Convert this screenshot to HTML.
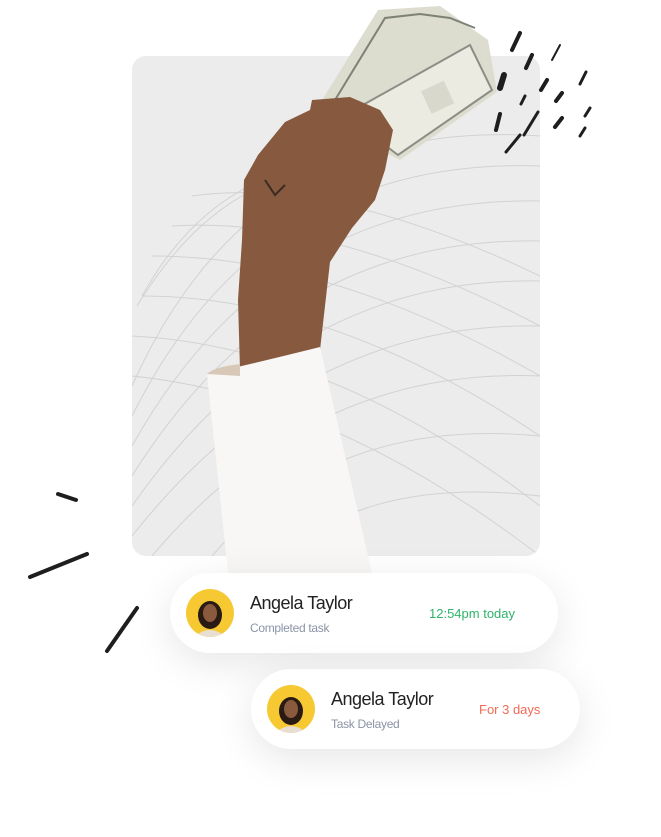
<!DOCTYPE html>
<html><head><style>
html,body{margin:0;padding:0;background:#fff;width:661px;height:837px;overflow:hidden;position:relative;font-family:"Liberation Sans",sans-serif}
.panel{position:absolute;left:132px;top:56px;width:408px;height:500px;background:#ececec;border-radius:14px;overflow:hidden}
.card{position:absolute;background:#fff;border-radius:40px;height:80px;box-shadow:0 10px 40px rgba(0,0,0,0.10)}
.av{position:absolute;width:48px;height:48px;border-radius:50%;background:#f6c933;overflow:hidden;top:16px}
.name{position:absolute;top:20px;font-size:18px;color:#222;letter-spacing:-0.5px}
.sub{position:absolute;top:48px;font-size:12px;color:#8a93a6;letter-spacing:-0.3px}
.t{position:absolute;top:33px;font-size:13px}
</style></head><body>
<div class="panel">
<svg width="408" height="500" style="position:absolute;left:0;top:0" fill="none" stroke="#d2d2d2" stroke-width="1">
<path d="M0 330 Q120 60 408 80"/><path d="M0 360 Q130 100 408 110"/><path d="M0 390 Q140 140 408 145"/><path d="M0 420 Q150 180 408 185"/><path d="M0 450 Q160 220 408 225"/><path d="M0 480 Q170 265 408 270"/><path d="M20 500 Q180 310 408 320"/><path d="M80 500 Q200 360 408 380"/><path d="M150 500 Q240 420 408 440"/>
<path d="M60 140 Q200 120 408 220"/><path d="M40 170 Q200 160 408 270"/><path d="M20 200 Q200 200 408 320"/><path d="M10 240 Q200 240 408 380"/><path d="M0 280 Q200 290 408 450"/><path d="M0 320 Q200 340 408 500"/>
<path d="M5 250 Q60 160 130 130"/><path d="M10 240 Q60 150 140 120"/>
</svg>
</div>
<svg width="661" height="837" style="position:absolute;left:0;top:0">
<!-- money -->
<path d="M322 100 L378 10 L440 6 L488 40 L497 92 L400 160 L350 135 Z" fill="#dcdccf"/>
<path d="M335 100 L385 18 L420 14 L450 18 L475 28" stroke="#7d8275" stroke-width="2" fill="none"/>
<path d="M345 115 L470 45 L492 90 L398 155 Z" fill="#ecebe1" stroke="#8d8d86" stroke-width="2"/>
<rect x="425" y="85" width="25" height="25" fill="#d8d8cc" transform="rotate(-25 437 97)"/>
<!-- hand -->
<path d="M240 370 L238 300 L242 240 L244 180 L258 155 L285 122 L310 110 L312 100 L350 97 L380 110 L393 130 L385 170 L375 200 L352 228 L330 262 L320 350 Z" fill="#875a3f"/>
<path d="M265 180 L275 195 L285 185" stroke="#3a2a22" stroke-width="2" fill="none"/>
<!-- sleeve -->
<path d="M207 374 Q260 362 320 347 L372 573 L228 573 Z" fill="#f8f7f5"/>
<path d="M207 374 Q214 367 240 364 L240 376 Z" fill="#d8c8b8"/>
<!-- marks -->
<g stroke="#1e1e1e" stroke-linecap="round" fill="none">
<path d="M520 33 L512 50" stroke-width="4"/><path d="M532 55 L526 68" stroke-width="4"/><path d="M504 75 L500 88" stroke-width="6"/><path d="M560 45 L552 60" stroke-width="2"/><path d="M547 80 L541 90" stroke-width="4"/><path d="M586 72 L580 84" stroke-width="3"/><path d="M525 96 L521 104" stroke-width="3"/><path d="M562 93 L556 101" stroke-width="4"/><path d="M590 108 L585 116" stroke-width="3"/><path d="M500 114 L496 130" stroke-width="4"/><path d="M538 112 L524 135" stroke-width="3"/><path d="M562 118 L555 127" stroke-width="4"/><path d="M520 135 L506 152" stroke-width="3"/><path d="M585 128 L580 136" stroke-width="3"/>
<path d="M58 494 L76 500" stroke-width="4"/><path d="M30 577 L87 554" stroke-width="4"/><path d="M107 651 L137 608" stroke-width="4"/>
</g>
</svg>
<div class="card" style="left:170px;top:573px;width:388px">
<div class="av" style="left:16px"><svg width="48" height="48"><ellipse cx="24" cy="26" rx="12" ry="14" fill="#2a1a14"/><ellipse cx="24" cy="24" rx="7" ry="9" fill="#8a5a3e"/><path d="M8 48 Q24 34 40 48Z" fill="#e8ded2"/></svg></div>
<div class="name" style="left:80px">Angela Taylor</div>
<div class="sub" style="left:80px">Completed task</div>
<div class="t" style="left:259px;color:#2fb36b">12:54pm today</div>
</div>
<div class="card" style="left:251px;top:669px;width:329px">
<div class="av" style="left:16px"><svg width="48" height="48"><ellipse cx="24" cy="26" rx="12" ry="14" fill="#2a1a14"/><ellipse cx="24" cy="24" rx="7" ry="9" fill="#8a5a3e"/><path d="M8 48 Q24 34 40 48Z" fill="#e8ded2"/></svg></div>
<div class="name" style="left:80px">Angela Taylor</div>
<div class="sub" style="left:80px">Task Delayed</div>
<div class="t" style="left:228px;color:#f36a55">For 3 days</div>
</div>
</body></html>
